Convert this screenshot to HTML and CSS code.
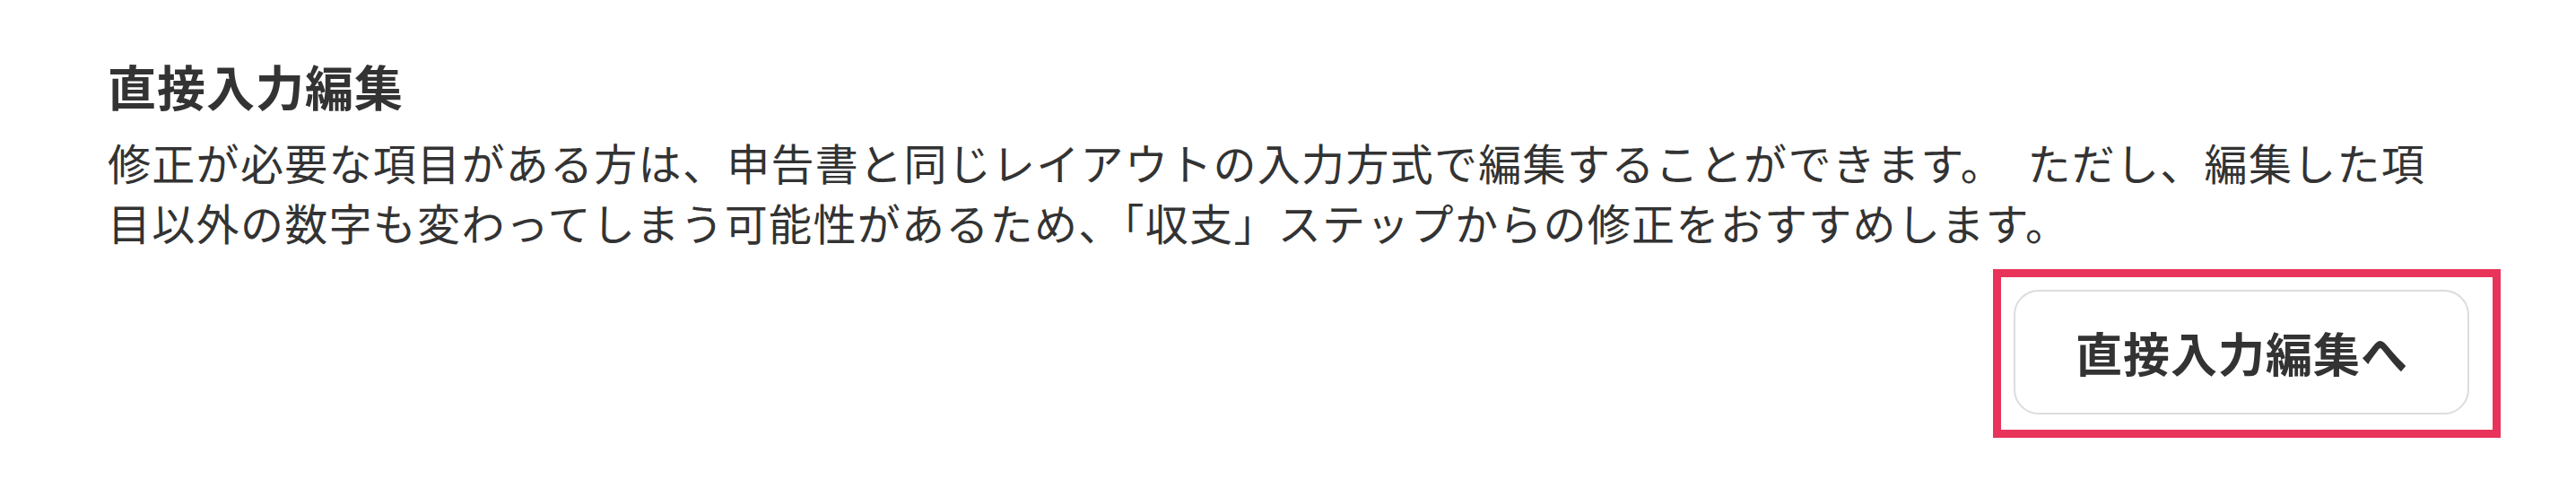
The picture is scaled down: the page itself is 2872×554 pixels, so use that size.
FILE: index.html
```html
<!DOCTYPE html>
<html lang="ja">
<head>
<meta charset="utf-8">
<title>直接入力編集</title>
<link rel="stylesheet" href="styles.css">
</head>
<body>
<section class="panel">
  <h2 class="title">直接入力編集</h2>
  <p class="desc">修正が必要な項目がある方は、申告書と同じレイアウトの入力方式で編集することができます。　ただし、編集した項目以外の数字も変わってしまう可能性があるため、「収支」ステップからの修正をおすすめします。</p>
  <div class="actions">
    <div class="btn-wrap">
      <button class="btn" type="button">直接入力編集へ</button>
      <span class="highlight"></span>
    </div>
  </div>
</section>
</body>
</html>
```

FILE: styles.css
```css
html, body {
  margin: 0;
  padding: 0;
  background: #ffffff;
}

body {
  font-family: "Noto Sans CJK JP", "Noto Sans", sans-serif;
  color: #333333;
  min-height: 554px;
}

.panel {
  padding: 58px 120px 92px 120px;
  width: 2632px;
}

.title {
  margin: 0;
  font-size: 54px;
  line-height: 76px;
  font-weight: 700;
  letter-spacing: 1px;
  color: #333333;
}

.desc {
  margin: 13px 0 0 0;
  font-size: 48px;
  line-height: 67px;
  font-weight: 400;
  letter-spacing: 1.3px;
  color: #333333;
}

.actions {
  display: flex;
  justify-content: flex-end;
  margin-top: 42px;
}

.btn-wrap {
  position: relative;
  margin-right: -1px;
}

.btn {
  display: block;
  font-family: "Noto Sans CJK JP", "Noto Sans", sans-serif;
  font-size: 52px;
  line-height: 75px;
  font-weight: 700;
  letter-spacing: 1px;
  color: #333333;
  background: #ffffff;
  border: 2px solid #dcdcdc;
  border-radius: 28px;
  padding: 30px 66px 30px 67px;
  margin: 0;
  cursor: pointer;
}

.highlight {
  position: absolute;
  left: -23px;
  right: -35px;
  top: -23px;
  bottom: -26px;
  border: 9px solid #e8345a;
  pointer-events: none;
}
```
